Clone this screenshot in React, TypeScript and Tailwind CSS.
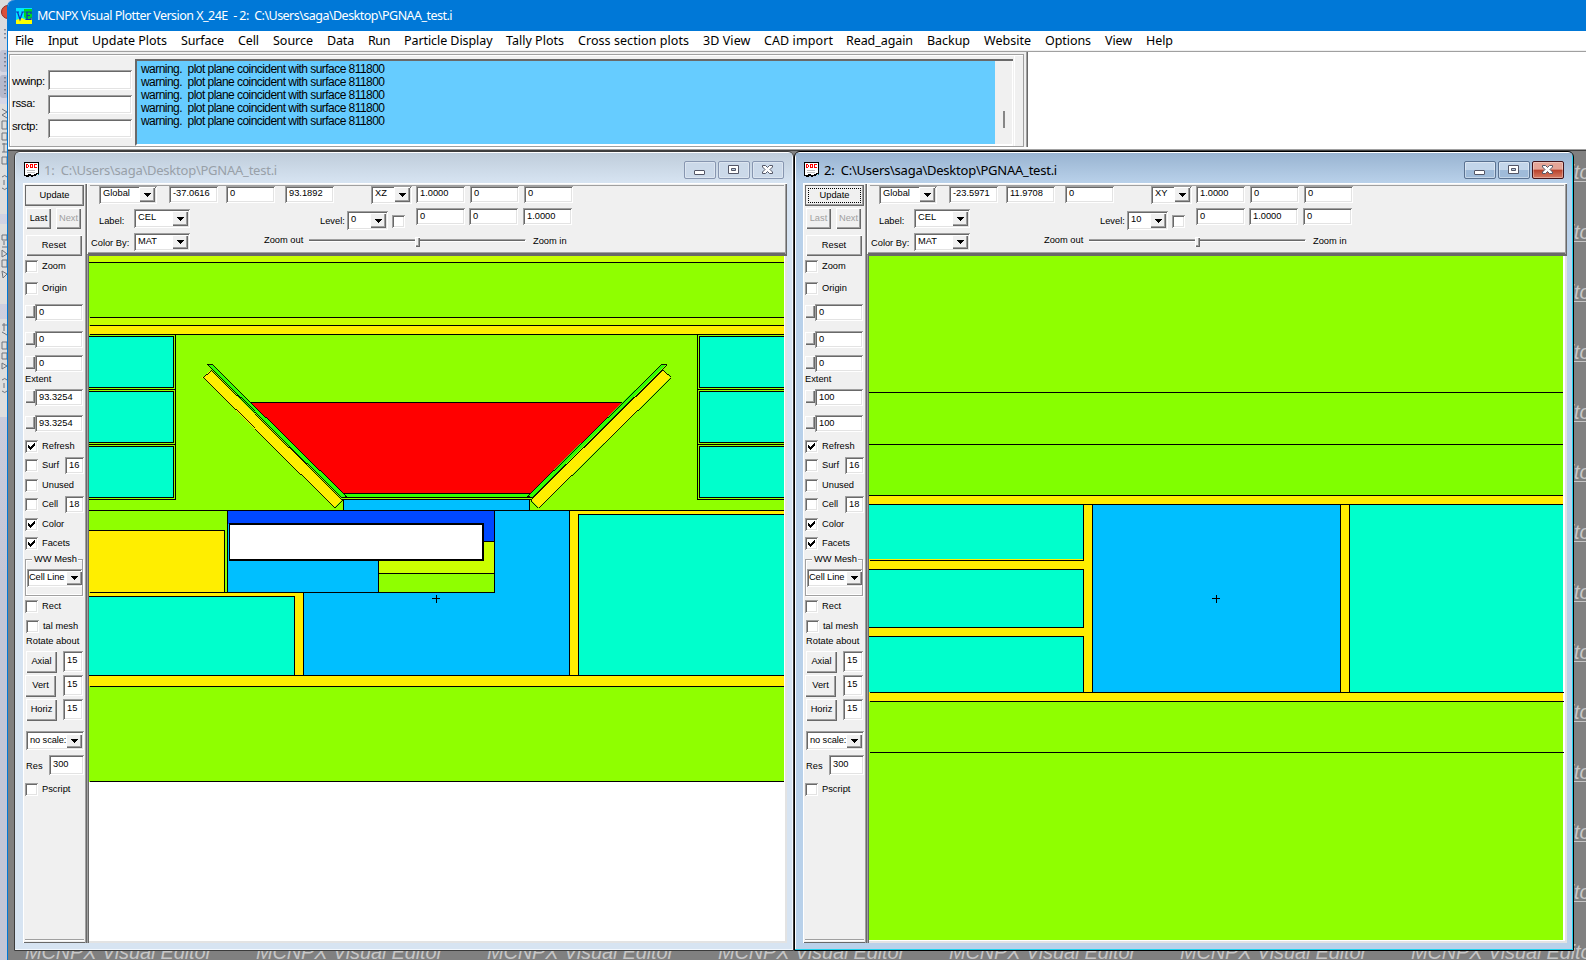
import { useLayoutEffect, useRef } from "react";
import type { ReactNode } from "react";

const SUNKEN =
  "bg-white shadow-[inset_1px_1px_0_#a0a0a0,inset_-1px_-1px_0_#ffffff,inset_2px_2px_0_#696969,inset_-2px_-2px_0_#e3e3e3]";
const RAISED =
  "bg-[#f0f0f0] shadow-[inset_1px_1px_0_#ffffff,inset_-1px_-1px_0_#696969,inset_-2px_-2px_0_#a0a0a0]";

/* Text whose letter spacing is adjusted so that it fills a given width. */
function Fit({ w, children, className = "" }: { w: number; children: string; className?: string }) {
  const ref = useRef<HTMLSpanElement>(null);
  useLayoutEffect(() => {
    const el = ref.current;
    if (!el) return;
    el.style.letterSpacing = "0px";
    const natural = el.getBoundingClientRect().width;
    el.style.letterSpacing = `${(w - natural) / children.length}px`;
  }, [w, children]);
  return (
    <span ref={ref} className={`inline-block shrink-0 whitespace-pre ${className}`}>
      {children}
    </span>
  );
}

function Field({ value, className = "" }: { value: string; className?: string }) {
  return <div className={`shrink-0 pl-[4px] whitespace-nowrap ${SUNKEN} ${className}`}>{value}</div>;
}

function Combo({ value, className = "" }: { value: string; className?: string }) {
  return (
    <div className={`flex shrink-0 items-stretch p-[2px] ${SUNKEN} ${className}`}>
      <span className="min-w-0 flex-1 overflow-hidden pl-[2px] leading-[13px] whitespace-nowrap">{value}</span>
      <span className={`flex w-4 shrink-0 items-center justify-center ${RAISED}`}>
        <svg width="7" height="4" viewBox="0 0 7 4" shapeRendering="crispEdges">
          <path d="M0 0h7v1H6v1H5v1H4v1H3V3H2V2H1V1H0z" fill="#000" />
        </svg>
      </span>
    </div>
  );
}

function Box({ on = false, className = "" }: { on?: boolean; className?: string }) {
  return (
    <span className={`flex h-[13px] w-[13px] shrink-0 items-center justify-center ${SUNKEN} ${className}`}>
      {on && (
        <svg width="7" height="7" viewBox="0 0 7 7" shapeRendering="crispEdges">
          <path d="M0 2h1v1h1v1h1v-1h1v-1h1v-1h1v-1h1v3h-1v1h-1v1h-1v1h-1v1h-1v-1h-1v-1h-1z" fill="#000" />
        </svg>
      )}
    </span>
  );
}

function Button({ children, className = "" }: { children: ReactNode; className?: string }) {
  return (
    <button className={`flex shrink-0 items-center justify-center pb-[2px] ${RAISED} ${className}`}>
      {children}
    </button>
  );
}

function Check({ label, on, num, className = "" }: { label: string; on?: boolean; num?: string; className?: string }) {
  return (
    <div className={`flex items-center ${className}`}>
      <Box on={on} />
      <span className="ml-[4px] pb-[2px] whitespace-nowrap">{label}</span>
      {num && <Field value={num} className="mr-[3px] ml-auto h-[17px] w-[19px] leading-[16px]" />}
    </div>
  );
}

function Slide({ value, className = "" }: { value: string; className?: string }) {
  return (
    <div className={`flex h-[17px] ${className}`}>
      <span className={`mt-[1px] h-[13px] w-[10px] ${RAISED}`} />
      <Field value={value} className="h-[17px] w-[48px] pl-[3px] leading-[17px]" />
    </div>
  );
}

type Win = {
  n: number;
  active: boolean;
  origin: [string, string, string];
  plane: string;
  level: string;
  v1: string[];
  v2: string[];
  extent: string;
};

function Sidebar({ win }: { win: Win }) {
  const rotate = [
    ["Axial", "mt-[3px] ml-[1px]", "ml-[6px]"],
    ["Vert", "mt-[2px]", "ml-[7px]"],
    ["Horiz", "mt-[2px] ml-[1px]", "ml-[6px]"],
  ];
  return (
    <div className="flex h-[760px] w-[64px] shrink-0 flex-col border-t border-l border-white bg-[#f0f0f0] pt-[1px] pl-[1px] shadow-[inset_-1px_0_0_#696969,inset_-2px_0_0_#a0a0a0,inset_0_-1px_0_#696969]">
      <Button className="h-[21px] w-[59px] outline outline-1 -outline-offset-1 outline-[#696969]">
        <span
          className={
            win.active
              ? "mt-[2px] flex h-[15px] w-[53px] items-center justify-center border border-dotted border-black pb-[1px]"
              : ""
          }
        >
          Update
        </span>
      </Button>
      <div className="mt-[2px] ml-[1px] flex h-[21px] gap-[5px]">
        <Button className={win.active ? "h-[21px] w-[25px] text-[#a0a0a0]" : "h-[21px] w-[25px]"}>Last</Button>
        <Button className="h-[21px] w-[25px] text-[#a0a0a0]">Next</Button>
      </div>
      <Button className="mt-[6px] ml-[1px] h-[21px] w-[56px]">Reset</Button>
      <Check label="Zoom" className="mt-[4px] h-[13px]" />
      <Check label="Origin" className="mt-[9px] h-[13px]" />
      <Slide value="0" className="mt-[9px]" />
      <Slide value="0" className="mt-[10px]" />
      <Slide value="0" className="mt-[7px]" />
      <div className="h-[14px] leading-[14px]">Extent</div>
      <Slide value={win.extent} className="mt-[3px]" />
      <Slide value={win.extent} className="mt-[9px]" />
      <Check label="Refresh" on className="mt-[8px] h-[13px]" />
      <Check label="Surf" num="16" className="mt-[4px] h-[17px]" />
      <Check label="Unused" className="mt-[5px] h-[13px]" />
      <Check label="Cell" num="18" className="mt-[4px] h-[17px]" />
      <Check label="Color" on className="mt-[5px] h-[13px]" />
      <Check label="Facets" on className="mt-[6px] h-[13px]" />
      <div className="mt-[9px] h-[37px] w-[58px] border border-[#a0a0a0] px-[1px] shadow-[inset_1px_1px_0_#fff,1px_1px_0_#fff]">
        <div className="-mt-[8px] ml-[5px] h-[14px] w-[46px] bg-[#f0f0f0] pl-[2px] leading-[14px] whitespace-nowrap">
          WW Mesh
        </div>
        <Combo value="Cell Line" className="mt-[3px] h-[18px] w-[55px] pr-0 pl-0 tracking-[-0.1px]" />
        <div className="h-[8px] border-b border-white" />
      </div>
      <Check label="Rect" className="mt-[4px] h-[13px]" />
      <Check label="tal mesh" className="mt-[7px] ml-[1px] h-[13px]" />
      <div className="mt-[1px] ml-[1px] h-[14px] leading-[14px] whitespace-nowrap">Rotate about</div>
      {rotate.map(([label, row, gap]) => (
        <div key={label} className={`flex h-[22px] ${row}`}>
          <Button className="h-[22px] w-[31px] pb-[1px]">{label}</Button>
          <Field value="15" className={`h-[21px] w-[20px] leading-[19px] ${gap}`} />
        </div>
      ))}
      <Combo value="no scale:" className="mt-[10px] ml-[1px] h-[19px] w-[58px] pt-[3px] tracking-[-0.1px]" />
      <div className="mt-[5px] ml-[1px] flex h-[20px] items-center justify-between pr-[3px]">
        <span className="pt-[1px]">Res</span>
        <Field value="300" className="h-[20px] w-[35px] leading-[18px]" />
      </div>
      <Check label="Pscript" className="mt-[8px] h-[13px]" />
      <div className="mt-auto mr-[3px] mb-[2px] h-[2px] border-t border-[#a0a0a0] bg-white" />
    </div>
  );
}

function Toolbar({ win }: { win: Win }) {
  return (
    <div className="flex h-[71px] flex-col border-t border-l border-white bg-[#f0f0f0] pt-[1px] shadow-[inset_-1px_0_0_#696969,inset_-2px_0_0_#a0a0a0,inset_0_-1px_0_#696969,inset_0_-2px_0_#a0a0a0]">
      <div className="mr-[3px] ml-[2px] flex h-[18px] shrink-0 border-t border-[#a0a0a0]">
        <Combo value="Global" className="ml-[9px] h-[18px] w-[58px] pt-[1px]" />
        <Field value={win.origin[0]} className="ml-[12px] h-[17px] w-[49px] leading-[15px]" />
        <Field value={win.origin[1]} className="ml-[8px] h-[17px] w-[49px] leading-[15px]" />
        <Field value={win.origin[2]} className="ml-[10px] h-[17px] w-[49px] leading-[15px]" />
        <Combo value={win.plane} className="ml-[37px] h-[18px] w-[41px] pt-[1px]" />
        <Field value={win.v1[0]} className="ml-[4px] h-[17px] w-[49px] leading-[15px]" />
        <Field value={win.v1[1]} className="ml-[5px] h-[17px] w-[49px] leading-[15px]" />
        <Field value={win.v1[2]} className="ml-[5px] h-[17px] w-[49px] leading-[15px]" />
      </div>
      <div className="mt-[5px] ml-[11px] flex h-[20px] shrink-0">
        <span className="w-[35px] pt-[7px]">Label:</span>
        <Combo value="CEL" className="mt-[1px] h-[19px] w-[56px]" />
        <span className="mt-[7px] ml-[130px] w-[27px] whitespace-nowrap">Level:</span>
        <Combo value={win.level} className="mt-[3px] h-[19px] w-[41px]" />
        <Box className="mt-[7px] ml-[4px]" />
        <Field value={win.v2[0]} className="ml-[11px] h-[17px] w-[49px] leading-[16px]" />
        <Field value={win.v2[1]} className="ml-[4px] h-[17px] w-[49px] leading-[16px]" />
        <Field value={win.v2[2]} className="ml-[5px] h-[17px] w-[49px] leading-[16px]" />
      </div>
      <div className="mt-[4px] ml-[3px] flex h-[19px] shrink-0">
        <span className="w-[43px] pt-[5px] whitespace-nowrap">Color By:</span>
        <Combo value="MAT" className="mt-[1px] h-[18px] w-[56px]" />
        <span className="mt-[2px] ml-[74px] w-[45px] whitespace-nowrap">Zoom out</span>
        <div className="mt-[7px] flex h-[3px] w-[217px] border-t border-r border-[#a0a0a0] border-r-white bg-[#696969] shadow-[inset_0_-1px_0_#fff]">
          <span className={`-mt-[3px] ml-[106px] h-[10px] w-[5px] ${RAISED}`} />
        </div>
        <span className="mt-[3px] ml-[7px] whitespace-nowrap">Zoom in</span>
      </div>
    </div>
  );
}

type Rect = [number, number, number, number, string];
type Line = [number, number, number, number];

const Y = "#ffee00";
const C = "#00ffcc";
const B = "#00bfff";
const G = "#8fff00";
const L = "#c6ff00";

const rects1: Rect[] = [
  [89, 256, 696, 526, G],
  [89, 256, 695, 6, L],
  [89, 318, 695, 7, L],
  [89, 326, 695, 8, Y],
  [89, 337, 84, 50, C],
  [89, 392, 84, 50, C],
  [89, 447, 84, 50, C],
  [700, 337, 84, 50, C],
  [700, 392, 84, 50, C],
  [700, 447, 84, 50, C],
  [344, 500, 185, 10, B],
  [89, 531, 135, 61, Y],
  [89, 593, 214, 82, Y],
  [89, 597, 205, 78, C],
  [304, 511, 265, 164, B],
  [228, 511, 267, 81, B],
  [228, 511, 266, 30, "#0048ff"],
  [228, 524, 2, 36, B],
  [379, 542, 115, 31, "#ccff00"],
  [379, 561, 115, 12, "#ccff00"],
  [379, 574, 115, 18, G],
  [570, 511, 214, 164, Y],
  [579, 515, 205, 160, C],
  [89, 676, 695, 10, Y],
];
const lines1: Line[] = [
  [89, 262, 784, 262], [90, 317, 784, 317], [90, 325, 784, 325], [90, 334, 784, 334],
  [175, 334, 175, 499], [89, 499, 176, 499],
  [89, 336, 174, 336], [89, 387, 174, 387], [173, 336, 173, 387], [89, 389, 176, 389],
  [89, 391, 174, 391], [89, 442, 174, 442], [173, 391, 173, 442], [89, 444, 176, 444],
  [89, 446, 174, 446], [89, 497, 174, 497], [173, 446, 173, 497],
  [697, 334, 697, 499], [697, 499, 784, 499],
  [699, 336, 784, 336], [699, 387, 784, 387], [699, 336, 699, 387], [697, 389, 784, 389],
  [699, 391, 784, 391], [699, 442, 784, 442], [699, 391, 699, 442], [697, 444, 784, 444],
  [699, 446, 784, 446], [699, 497, 784, 497], [699, 446, 699, 497],
  [89, 510, 784, 510], [227, 510, 227, 592], [89, 530, 225, 530], [224, 530, 224, 592],
  [90, 592, 495, 592], [89, 596, 295, 596], [294, 596, 294, 675], [303, 592, 303, 675],
  [494, 510, 494, 592], [484, 541, 494, 541], [378, 573, 494, 573], [378, 561, 378, 592],
  [569, 510, 569, 675], [578, 514, 578, 675], [578, 514, 784, 514],
  [89, 675, 784, 675], [90, 686, 784, 686], [90, 781, 785, 781],
  [343, 499, 343, 510], [529, 499, 529, 510],
];
const rects2: Rect[] = [
  [869, 256, 694, 684, G],
  [869, 393, 694, 51, "#88ff00"],
  [869, 445, 694, 50, "#80ff00"],
  [869, 496, 694, 205, Y],
  [869, 505, 214, 54, C],
  [869, 569, 214, 58, C],
  [869, 637, 214, 55, C],
  [1093, 505, 247, 187, B],
  [1350, 505, 213, 187, C],
];
const lines2: Line[] = [
  [869, 392, 1563, 392], [869, 444, 1563, 444], [869, 495, 1563, 495], [869, 504, 1563, 504],
  [870, 560, 1084, 560], [1083, 504, 1083, 560], [869, 569, 1084, 569], [1083, 569, 1083, 627],
  [869, 627, 1084, 627], [869, 636, 1084, 636], [1083, 636, 1083, 692], [1092, 504, 1092, 692],
  [1340, 504, 1340, 692], [1349, 504, 1349, 692],
  [870, 692, 1564, 692], [870, 701, 1564, 701], [870, 752, 1564, 752],
];

function Shapes({ rects, lines }: { rects: Rect[]; lines: Line[] }) {
  return (
    <g>
      {rects.map(([x, y, w, h, f], i) => (
        <rect key={i} x={x} y={y} width={w} height={h} fill={f} />
      ))}
      {lines.map(([x1, y1, x2, y2], i) => (
        <rect key={i} x={x1} y={y1} width={x2 === x1 ? 1 : x2 - x1} height={y2 === y1 ? 1 : y2 - y1} fill="#000" />
      ))}
    </g>
  );
}

function Arm() {
  return (
    <g stroke="#000" strokeWidth="0.9">
      <path d="M202.5 377.5 210.5 370.5 342 499.5 334.5 507.5z" fill={Y} />
      <path d="M206.5 364.5H212L346.5 496.5 341.5 497.5z" fill="#30ff00" />
    </g>
  );
}

function Scene1() {
  return (
    <svg width="695" height="686" viewBox="89 256 695 686" shapeRendering="crispEdges">
      <Shapes rects={rects1} lines={lines1} />
      <path d="M250 402.5H623L529.5 493.5H343.5z" fill="#ff0000" />
      <path d="M250 402h373v1H250z" fill="#000" />
      <path d="M343 494h187v3H343z" fill="#30ff00" />
      <path d="M343 493h187v1H343zM341 497h191v1H341zM341 499h191v1H341z" fill="#000" />
      <Arm />
      <g transform="matrix(-1 0 0 1 873 0)">
        <Arm />
      </g>
      <path d="M229 523h255v38H229z" fill="#000" />
      <path d="M230 525h252v34H230z" fill="#fff" />
      <path d="M432 598h8v1h-8zM436 595h1v8h-1z" fill="#000" />
    </svg>
  );
}

function Scene2() {
  return (
    <svg width="695" height="686" viewBox="869 256 695 686" shapeRendering="crispEdges">
      <Shapes rects={rects2} lines={lines2} />
      <path d="M1212 598h8v1h-8zM1216 595h1v8h-1z" fill="#000" />
    </svg>
  );
}

function DocIcon() {
  return (
    <svg width="16" height="16" viewBox="0 0 16 16" className="shrink-0" shapeRendering="crispEdges">
      <path d="M0 0h15v12h-2v1h-1v1H9v1H7v-1H5v1H2v-1H0z" fill="#000" />
      <path d="M1 1h13v10h-2v1h-2v1H7v-1H4v1H1z" fill="#fff" />
      <path
        d="M2 2h2v1h1v2H4v1H2zM3 3v2h1V3zM6 2h3v4H6zM7 3v2h1V3zM10 2h3v1h-2v2h2v1h-3z"
        fill="#ff0000"
        fillRule="evenodd"
      />
      <path d="M3 8h8v1H3zM3 10h8v1H3z" fill="#c0c0c0" />
      <path d="M14 12h1v1h-1z" fill="#008080" />
    </svg>
  );
}

function TitleButtons({ active }: { active: boolean }) {
  const base = active
    ? "flex h-[18px] w-[32px] items-center justify-center rounded-[2px] border border-[#5a7291] bg-linear-to-b from-[#c3d6ea] from-50% to-[#9fbbd9] to-50% shadow-[inset_0_0_0_1px_#ffffff66]"
    : "flex h-[18px] w-[32px] items-center justify-center rounded-[2px] border border-[#8796b0] bg-[#cbd9e9] shadow-[inset_0_0_0_1px_#ffffff55]";
  const close = active
    ? "flex h-[18px] w-[32px] items-center justify-center rounded-[2px] border border-[#43141a] bg-linear-to-b from-[#e5a597] from-45% via-[#b8402a] via-50% to-[#d67b64] shadow-[inset_0_0_0_1px_#ffffff55]"
    : base;
  return (
    <div className="flex gap-[2px]">
      <span className={base}>
        <svg width="12" height="12" viewBox="0 0 12 12">
          <rect x="0.5" y="6.500" width="10" height="4" rx="0.5" fill="#fff" stroke="#535666" />
        </svg>
      </span>
      <span className={base}>
        <svg width="12" height="12" viewBox="0 0 12 12">
          <path d="M0.5 1.500h10v8h-10z" fill="#fff" stroke="#535666" />
          <path d="M3.500 4.500h4v2h-4z" fill="#b8cbe0" stroke="#535666" />
        </svg>
      </span>
      <span className={close}>
        <svg width="12" height="12" viewBox="0 0 12 12">
          <path
            d="M0.500 1.500h3l2 2 2-2h3v1.500L8 5.500 10.500 8V9.500h-3l-2-2-2 2h-3V8L3 5.500 0.500 3z"
            fill="#fff"
            stroke="#535666"
          />
        </svg>
      </span>
    </div>
  );
}

function ChildWindow({ win, children, className }: { win: Win; children: ReactNode; className: string }) {
  const a = win.active;
  return (
    <div
      className={`absolute flex h-[800px] w-[780px] flex-col overflow-hidden rounded-t-[6px] border ${
        a
          ? "border-black bg-[#b9d1ea] shadow-[inset_-1px_-1px_0_#1fd2ee,inset_1px_1px_0_#ffffff]"
          : "border-[#3c3c3c] bg-[#d7e4f2] shadow-[inset_0_1px_0_#ffffff,inset_-1px_-1px_0_#f2f8ff]"
      } ${className}`}
    >
      <div
        className={`mx-[1px] mt-[1px] flex h-[30px] shrink-0 items-start pt-[9px] pr-[8px] pl-[8px] ${
          a ? "bg-linear-to-b from-[#99b4d1] to-[#b9d1ea]" : "bg-linear-to-b from-[#bfcddb] to-[#d7e4f2]"
        }`}
      >
        <DocIcon />
        <Fit
          w={233}
          className={`-mt-[1px] ml-[4px] font-['Noto_Sans',sans-serif] text-[13px] leading-[18px] ${
            a ? "text-black" : "text-[#98a0a8]"
          }`}
        >
          {`${win.n}:  C:\\Users\\saga\\Desktop\\PGNAA_test.i`}
        </Fit>
        <div className="-mt-[1px] ml-auto">
          <TitleButtons active={a} />
        </div>
      </div>
      <div className="ml-[8px] flex h-[760px] w-[764px] shrink-0">
        <Sidebar win={win} />
        <div className="flex h-[760px] w-[700px] flex-col bg-white">
          <Toolbar win={win} />
          <div className="h-[689px] overflow-hidden border-t border-l border-[#a0a0a0] bg-white shadow-[inset_1px_1px_0_#696969,inset_-2px_-2px_0_#e3e3e3] [border-top-color:#696969] pt-[1px] pl-[1px]">
            {children}
          </div>
        </div>
      </div>
    </div>
  );
}

const wins: Win[] = [
  {
    n: 1,
    active: false,
    origin: ["-37.0616", "0", "93.1892"],
    plane: "XZ",
    level: "0",
    v1: ["1.0000", "0", "0"],
    v2: ["0", "0", "1.0000"],
    extent: "93.3254",
  },
  {
    n: 2,
    active: true,
    origin: ["-23.5971", "11.9708", "0"],
    plane: "XY",
    level: "10",
    v1: ["1.0000", "0", "0"],
    v2: ["0", "1.0000", "0"],
    extent: "100",
  },
];

/* label, slot width up to the next entry, text width */
const menu: [string, string, number][] = [
  ["File", "w-[33px]", 18.5],
  ["Input", "w-[44px]", 30],
  ["Update Plots", "w-[89px]", 75],
  ["Surface", "w-[57px]", 43],
  ["Cell", "w-[35px]", 21],
  ["Source", "w-[54px]", 40],
  ["Data", "w-[41px]", 27],
  ["Run", "w-[36px]", 22],
  ["Particle Display", "w-[102px]", 88.5],
  ["Tally Plots", "w-[72px]", 58],
  ["Cross section plots", "w-[125px]", 111],
  ["3D View", "w-[61px]", 47.5],
  ["CAD import", "w-[82px]", 69],
  ["Read_again", "w-[81px]", 67],
  ["Backup", "w-[57px]", 43],
  ["Website", "w-[61px]", 47],
  ["Options", "w-[60px]", 46],
  ["View", "w-[41px]", 27],
  ["Help", "w-[40px]", 27],
];

function Desktop() {
  return (
    <div className="flex flex-1 flex-col overflow-hidden border-t border-[#a0a0a0] bg-[#808080] shadow-[inset_0_1px_0_#404040] font-['Liberation_Sans',sans-serif] text-[20px] leading-[24px] text-[#c6c6c6] italic">
      <div className="ml-[1565px] flex h-[790px] w-[13px] shrink-0 flex-col gap-[38px] overflow-hidden pt-[10px]">
        {Array.from({ length: 13 }, (_, i) => (
          <div key={i} className="-ml-[163px] h-[22px] w-[188px] shrink-0 border-b border-[#c6c6c6]">
            <Fit w={187}>MCNPX Visual Editor</Fit>
          </div>
        ))}
      </div>
      <div className="ml-[17px] flex h-[24px] shrink-0">
        {Array.from({ length: 7 }, (_, i) => (
          <div key={i} className="w-[231px] shrink-0 whitespace-nowrap">
            <Fit w={187}>MCNPX Visual Editor</Fit>
          </div>
        ))}
      </div>
    </div>
  );
}

function LeftEdge() {
  return (
    <div className="flex w-[8px] shrink-0 flex-col overflow-hidden bg-linear-to-b from-[#dcdcdc] via-[#d5d6e6] via-10% to-[#c4c6d6] to-60%">
      <svg width="8" height="430" viewBox="0 0 8 430">
        <rect y="104" width="8" height="110" fill="#dedede" />
        <rect y="224" width="8" height="80" fill="#dedede" />
        <rect y="319" width="8" height="98" fill="#dedede" />
        <rect y="50" width="8" height="22" rx="3" fill="#bfc2d4" />
        <rect y="75" width="8" height="23" rx="3" fill="#b6b9cc" />
        <circle cx="8" cy="12" r="6.500" fill="#d9503c" stroke="#8f2a20" />
        <path
          d="M5 29v10M5 53v16M5 77v17"
          stroke="#6b6f80"
          strokeWidth="1.500"
          strokeDasharray="1.500 2.500"
        />
        <g fill="none" stroke="#70747c">
          <path d="M2 109l5 3-5 3 5 3M2 121h5v8H2zM2 133h5v7H2zM2 144h5M4 143v9M2 152h5M2 157h5v7H2zM2 177q3-3 5 0M4 180v5M2 188q3 3 5 0" />
          <path d="M2 235h5v5H2zM4 241v4M2 247h5M2 250l5 4-5 3zM2 260h5v7H2zM2 271l5 3-4 4z" />
          <path d="M2 325h5M4 323v8M2 332l5 3M2 342h5v7H2zM2 353h5v6H2zM2 363l5 3-5 3zM2 380q3-3 5 0M4 383v5M2 391q3 3 5 0" />
        </g>
      </svg>
    </div>
  );
}

function StatusPanel() {
  const rows: [string, string, string][] = [
    ["wwinp:", "h-[20px]", "pt-[1px]"],
    ["rssa:", "mt-[5px] h-[19px]", "pb-[3px]"],
    ["srctp:", "mt-[5px] h-[19px]", "pb-[5px]"],
  ];
  return (
    <div className="flex h-[97px] shrink-0 bg-white">
      <div className="flex h-[95px] w-[1020px] shrink-0 border-r border-[#696969] bg-[#f0f0f0] pt-[2px] pl-[1px] shadow-[inset_-1px_0_0_#a0a0a0]">
        <div className="mr-[3px] flex h-[93px] flex-1 border border-[#a0a0a0] shadow-[inset_1px_1px_0_#fff]">
          <div className="w-[125px] shrink-0 pt-[15px] pl-[2px] font-['Liberation_Sans',sans-serif] text-[11.500px] text-black">
            {rows.map(([label, cls, pad]) => (
              <div key={label} className={`flex items-center ${cls}`}>
                <span className={`w-[36px] tracking-[-0.4px] ${pad}`}>{label}</span>
                <span className={`h-full w-[84px] ${SUNKEN}`} />
              </div>
            ))}
          </div>
          <div className="mt-[4px] flex h-[87px] w-[878px] border-t-2 border-b-2 border-l-2 border-[#696969] border-b-white">
            <div className="h-[83px] w-[858px] bg-[#66ccff] pt-[2px] pl-[4px] font-['Liberation_Sans',sans-serif] text-[12px] leading-[13px] text-black">
              {Array.from({ length: 5 }, (_, i) => (
                <div key={i} className="h-[13px]">
                  <Fit w={243.5}>{"warning.  plot plane coincident with surface 811800"}</Fit>
                </div>
              ))}
            </div>
            <div className="flex flex-1 justify-center border-r border-white pt-[50px]">
              <span className="h-[17px] w-[2px] bg-[#868686]" />
            </div>
          </div>
          <div className="mt-[1px] ml-[1px] flex-1 border-l border-white" />
        </div>
      </div>
    </div>
  );
}

export default function App() {
  return (
    <div className="relative flex h-[960px] w-[1586px] overflow-hidden bg-[#d5d6e6] font-['Liberation_Sans',sans-serif] text-[9.300px] leading-[12px] text-black">
      <LeftEdge />
      <div className="flex min-w-0 flex-1 flex-col overflow-hidden rounded-tl-[7px] shadow-[-1px_0_0_#0078d7]">
        <div className="flex h-[31px] shrink-0 items-center bg-[#0078d7] pl-[8px]">
          <svg width="16" height="16" viewBox="0 0 16 16">
            <rect width="16" height="16" fill="#00e4ff" />
            <path d="M0 12l6-2 4 2 6-2v6H0z" fill="#ffff00" />
            <path d="M8 1h8v9l-5 2-3-3z" fill="#00d820" />
            <path
              d="M0 4h3M1.500 4l2.500 7.500L6.500 4M5.500 4h3M9.500 4H15v2M11 4v7.500M9.500 11.500H15v-2M11 7.500h3"
              fill="none"
              stroke="#1030c0"
              strokeWidth="1.200"
            />
          </svg>
          <Fit w={415} className="ml-[5px] font-['Noto_Sans',sans-serif] text-[12.500px] leading-[18px] text-white">
            {"MCNPX Visual Plotter Version X_24E  - 2:  C:\\Users\\saga\\Desktop\\PGNAA_test.i"}
          </Fit>
        </div>
        <div className="flex h-[19px] shrink-0 items-center bg-white pl-[7px] font-['Noto_Sans',sans-serif] text-[12.500px]">
          {menu.map(([label, slot, w]) => (
            <span key={label} className={`shrink-0 leading-[18px] ${slot}`}>
              <Fit w={w}>{label}</Fit>
            </span>
          ))}
        </div>
        <div className="h-[2px] shrink-0 border-b border-[#a0a0a0] bg-[#f0f0f0]" />
        <StatusPanel />
        <Desktop />
      </div>
      <ChildWindow win={wins[0]} className="top-[151px] left-[14px]">
        <Scene1 />
      </ChildWindow>
      <ChildWindow win={wins[1]} className="top-[151px] left-[794px]">
        <Scene2 />
      </ChildWindow>
    </div>
  );
}
